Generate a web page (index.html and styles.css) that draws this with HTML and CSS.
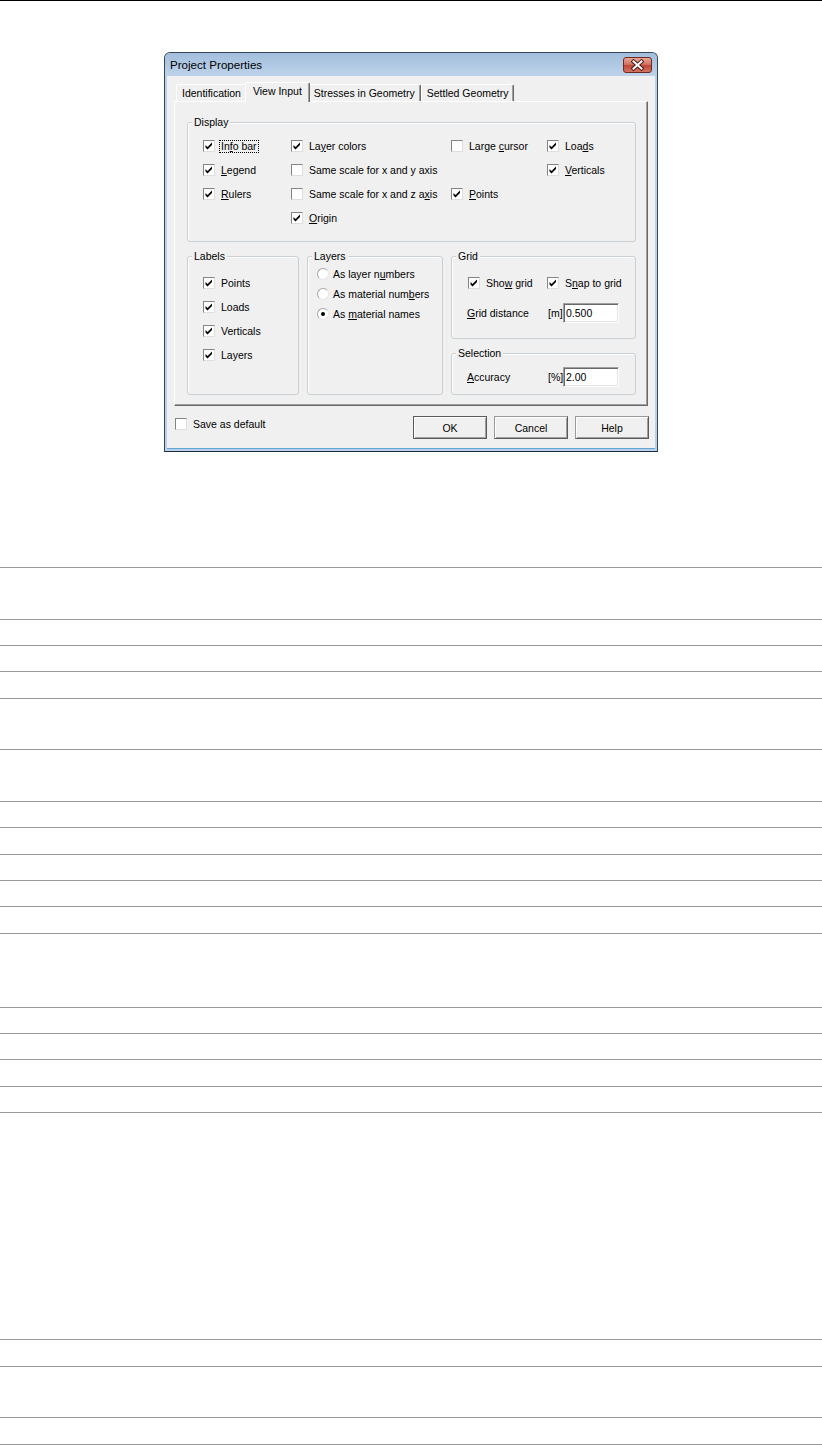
FILE: index.html
```html
<!DOCTYPE html>
<html lang="en">
<head>
    <meta charset="UTF-8">
    <title>Project Properties</title>
    <link rel="stylesheet" href="styles.css">
</head>
<body>
    <div class="top-rule"></div>

    <div class="window">
        <div class="titlebar">
            <span class="title">Project Properties</span>
            <span class="close">
                <svg width="27" height="14" viewBox="0 0 27 14">
                    <path d="M9.5 3.5 L17.5 10.5 M17.5 3.5 L9.5 10.5" stroke="#4a1a14" stroke-width="4" stroke-linecap="square"/>
                    <path d="M9.5 3.5 L17.5 10.5 M17.5 3.5 L9.5 10.5" stroke="#fff" stroke-width="2" stroke-linecap="square"/>
                </svg>
            </span>
        </div>
        <div class="client">
            <div class="tabs">
                <span class="tab">Identification</span>
                <span class="tab active">View Input</span>
                <span class="tab">Stresses in Geometry</span>
                <span class="tab">Settled Geometry</span>
            </div>

            <div class="page">
                <div class="group display">
                    <span class="group-title">Display</span>
                    <div class="display-options">
                        <label class="check"><span class="box"><svg viewBox="0 0 10 10"><path d="M1.5 4 L3.5 6 L8 1.5 V4 L3.5 8.5 L1.5 6.5 Z"/></svg></span><span class="text focus">In<u>f</u>o bar</span></label>
                        <label class="check"><span class="box"><svg viewBox="0 0 10 10"><path d="M1.5 4 L3.5 6 L8 1.5 V4 L3.5 8.5 L1.5 6.5 Z"/></svg></span><span class="text">La<u>y</u>er colors</span></label>
                        <label class="check"><span class="box"></span><span class="text">Large <u>c</u>ursor</span></label>
                        <label class="check"><span class="box"><svg viewBox="0 0 10 10"><path d="M1.5 4 L3.5 6 L8 1.5 V4 L3.5 8.5 L1.5 6.5 Z"/></svg></span><span class="text">Loa<u>d</u>s</span></label>

                        <label class="check"><span class="box"><svg viewBox="0 0 10 10"><path d="M1.5 4 L3.5 6 L8 1.5 V4 L3.5 8.5 L1.5 6.5 Z"/></svg></span><span class="text"><u>L</u>egend</span></label>
                        <label class="check"><span class="box"></span><span class="text">Same scale for x and y axis</span></label>
                        <span></span>
                        <label class="check"><span class="box"><svg viewBox="0 0 10 10"><path d="M1.5 4 L3.5 6 L8 1.5 V4 L3.5 8.5 L1.5 6.5 Z"/></svg></span><span class="text"><u>V</u>erticals</span></label>

                        <label class="check"><span class="box"><svg viewBox="0 0 10 10"><path d="M1.5 4 L3.5 6 L8 1.5 V4 L3.5 8.5 L1.5 6.5 Z"/></svg></span><span class="text"><u>R</u>ulers</span></label>
                        <label class="check"><span class="box"></span><span class="text">Same scale for x and z a<u>x</u>is</span></label>
                        <label class="check"><span class="box"><svg viewBox="0 0 10 10"><path d="M1.5 4 L3.5 6 L8 1.5 V4 L3.5 8.5 L1.5 6.5 Z"/></svg></span><span class="text"><u>P</u>oints</span></label>
                        <span></span>

                        <span></span>
                        <label class="check"><span class="box"><svg viewBox="0 0 10 10"><path d="M1.5 4 L3.5 6 L8 1.5 V4 L3.5 8.5 L1.5 6.5 Z"/></svg></span><span class="text"><u>O</u>rigin</span></label>
                    </div>
                </div>

                <div class="lower">
                    <div class="group">
                        <span class="group-title">Labels</span>
                        <div class="label-options">
                            <label class="check"><span class="box"><svg viewBox="0 0 10 10"><path d="M1.5 4 L3.5 6 L8 1.5 V4 L3.5 8.5 L1.5 6.5 Z"/></svg></span><span class="text">Points</span></label>
                            <label class="check"><span class="box"><svg viewBox="0 0 10 10"><path d="M1.5 4 L3.5 6 L8 1.5 V4 L3.5 8.5 L1.5 6.5 Z"/></svg></span><span class="text">Loads</span></label>
                            <label class="check"><span class="box"><svg viewBox="0 0 10 10"><path d="M1.5 4 L3.5 6 L8 1.5 V4 L3.5 8.5 L1.5 6.5 Z"/></svg></span><span class="text">Verticals</span></label>
                            <label class="check"><span class="box"><svg viewBox="0 0 10 10"><path d="M1.5 4 L3.5 6 L8 1.5 V4 L3.5 8.5 L1.5 6.5 Z"/></svg></span><span class="text">Layers</span></label>
                        </div>
                    </div>

                    <div class="group">
                        <span class="group-title">Layers</span>
                        <div class="layer-options">
                            <label class="radio-item"><span class="radio"></span><span class="text">As layer n<u>u</u>mbers</span></label>
                            <label class="radio-item"><span class="radio"></span><span class="text">As material num<u>b</u>ers</span></label>
                            <label class="radio-item"><span class="radio on"></span><span class="text">As <u>m</u>aterial names</span></label>
                        </div>
                    </div>

                    <div class="side">
                        <div class="group grid-box">
                            <span class="group-title">Grid</span>
                            <div class="grid-checks">
                                <label class="check"><span class="box"><svg viewBox="0 0 10 10"><path d="M1.5 4 L3.5 6 L8 1.5 V4 L3.5 8.5 L1.5 6.5 Z"/></svg></span><span class="text">Sho<u>w</u> grid</span></label>
                                <label class="check"><span class="box"><svg viewBox="0 0 10 10"><path d="M1.5 4 L3.5 6 L8 1.5 V4 L3.5 8.5 L1.5 6.5 Z"/></svg></span><span class="text">S<u>n</u>ap to grid</span></label>
                            </div>
                            <div class="field">
                                <span><u>G</u>rid distance</span>
                                <span>[m]</span>
                                <input type="text" value="0.500">
                            </div>
                        </div>
                        <div class="group selection-box">
                            <span class="group-title">Selection</span>
                            <div class="field">
                                <span><u>A</u>ccuracy</span>
                                <span>[%]</span>
                                <input type="text" value="2.00">
                            </div>
                        </div>
                    </div>
                </div>
            </div>

            <div class="footer">
                <label class="check save-default"><span class="box"></span><span class="text">Save as default</span></label>
                <div class="buttons">
                    <button type="button" class="default">OK</button>
                    <button type="button">Cancel</button>
                    <button type="button">Help</button>
                </div>
            </div>
        </div>
    </div>

    <div class="notes">
        <div class="h52"></div>
        <div class="h26"></div>
        <div class="h26"></div>
        <div class="h27"></div>
        <div class="h51"></div>
        <div class="h52"></div>
        <div class="h26"></div>
        <div class="h27"></div>
        <div class="h26"></div>
        <div class="h26"></div>
        <div class="h27"></div>
        <div class="h74"></div>
        <div class="h26"></div>
        <div class="h26"></div>
        <div class="h27"></div>
        <div class="h26"></div>
        <div class="h227"></div>
        <div class="h27"></div>
        <div class="h51"></div>
        <div class="h27"></div>
    </div>
</body>
</html>
```

FILE: styles.css
```css
body {
    margin: 0;
    background-color: #fff;
    color: #000;
    font-family: "Liberation Sans", Arial, sans-serif;
    font-size: 10.5px;
}
.top-rule {
    height: 1px;
    background-color: #000;
}

/* dialog frame */
.window {
    box-sizing: border-box;
    width: 494px;
    height: 400px;
    margin: 51px auto 0;
    padding: 0 2px 2px;
    border: 1px solid #34475c;
    border-bottom-color: #1f2f40;
    border-radius: 6px 6px 0 0;
    background-color: #b9d0e8;
}
.titlebar {
    height: 23px;
    margin: 0 -2px;
    padding: 0 5px;
    display: flex;
    justify-content: space-between;
    align-items: center;
    border-radius: 5px 5px 0 0;
    background: linear-gradient(#a3bedc, #bdd3ea);
}
.title {
    font-size: 11.6px;
}
.close {
    align-self: flex-start;
    margin-top: 4px;
    box-sizing: border-box;
    width: 29px;
    height: 16px;
    border: 1px solid #6b2b22;
    border-radius: 3px;
    background: linear-gradient(#e9a797, #d47262 45%, #c0463a 55%, #d5735f);
}
.close svg {
    display: block;
}
.client {
    height: 373px;
    background-color: #f0f0f0;
    border-bottom: 1px solid #5fa6d8;
    box-sizing: border-box;
}

/* tabs */
.tabs {
    box-sizing: border-box;
    height: 25px;
    padding: 6px 0 0 9px;
    display: flex;
    align-items: flex-end;
}
.tab {
    box-sizing: border-box;
    height: 17px;
    padding: 0 5px;
    line-height: 16px;
    white-space: nowrap;
    border: 1px solid;
    border-color: #fff #696969 transparent #fff;
    border-bottom: none;
    border-radius: 2px 2px 0 0;
    box-shadow: inset -1px 0 0 #a0a0a0;
    background-color: #f0f0f0;
}
.tab.active {
    position: relative;
    z-index: 1;
    height: 20px;
    margin: 0 -2px -1px;
    padding: 0 7px 4px;
}
.page {
    box-sizing: border-box;
    height: 305px;
    margin: 0 7px;
    padding: 20px 11px 0 12px;
    border: 1px solid;
    border-color: #fff #696969 #696969 #fff;
    box-shadow: inset -1px -1px 0 #a0a0a0;
}

/* group boxes */
.group {
    box-sizing: border-box;
    border: 1px solid #c9d1d6;
    border-radius: 3px;
    box-shadow: inset 1px 1px 0 #fff;
}
.group-title {
    display: block;
    width: fit-content;
    margin: -7px 0 0 4px;
    padding: 0 2px;
    line-height: 13px;
    background-color: #f0f0f0;
}
.display {
    height: 120px;
}
.display-options {
    margin-top: 5px;
    padding-left: 15px;
    display: grid;
    grid-template-columns: 88px 160px 96px 1fr;
    grid-auto-rows: 24px;
}
.lower {
    margin-top: 14px;
    height: 139px;
    display: grid;
    grid-template-columns: 112px 136px 185px;
    column-gap: 8px;
}
.label-options {
    margin-top: 8px;
    padding-left: 15px;
    display: grid;
    grid-auto-rows: 24px;
}
.layer-options {
    margin-top: 1px;
    padding-left: 9px;
    display: grid;
    grid-auto-rows: 20px;
}
.side {
    display: flex;
    flex-direction: column;
    gap: 14px;
}
.grid-box {
    height: 83px;
}
.selection-box {
    height: 42px;
}
.grid-checks {
    margin-top: 8px;
    padding-left: 16px;
    height: 24px;
    display: grid;
    grid-template-columns: 79px auto;
}
.field {
    margin-top: 8px;
    padding-left: 15px;
    height: 20px;
    display: grid;
    grid-template-columns: 81px 15px 56px;
    align-items: center;
}
.selection-box .field {
    margin-top: 7px;
}
.field input {
    box-sizing: border-box;
    width: 56px;
    height: 20px;
    margin: 0;
    padding: 0 2px;
    font-family: inherit;
    font-size: 10.5px;
    color: #000;
    background-color: #fff;
    border: 1px solid;
    border-color: #a0a0a0 #fff #fff #a0a0a0;
    box-shadow: inset 1px 1px 0 #696969, inset -1px -1px 0 #e3e3e3;
    outline: none;
}

/* check boxes and radios */
.check,
.radio-item {
    display: flex;
    align-items: center;
    gap: 4px;
    white-space: nowrap;
}
.radio-item {
    gap: 2px;
}
.box {
    box-sizing: border-box;
    width: 12px;
    height: 12px;
    flex: none;
    border: 1px solid;
    border-color: #848484 #dedede #dedede #848484;
    background-color: #fff;
}
.box svg {
    display: block;
    width: 10px;
    height: 10px;
}
.box path {
    fill: #000;
}
.radio {
    box-sizing: border-box;
    width: 12px;
    height: 12px;
    flex: none;
    display: flex;
    align-items: center;
    justify-content: center;
    border: 1px solid;
    border-color: #a8a8a8 #e6e6e6 #e6e6e6 #a8a8a8;
    border-radius: 50%;
    background-color: #fff;
}
.radio.on::after {
    content: '';
    width: 4px;
    height: 4px;
    border-radius: 50%;
    background-color: #000;
}
.text {
    padding: 0 1px;
    line-height: 11px;
    border: 1px dotted transparent;
}
.text.focus {
    border-color: #000;
}

/* footer */
.footer {
    margin-top: 10px;
    padding: 0 6px 0 8px;
    display: flex;
    justify-content: space-between;
}
.save-default {
    align-self: flex-start;
    margin-top: 2px;
    height: 12px;
}
.buttons {
    display: flex;
    gap: 7px;
}
.buttons button {
    box-sizing: border-box;
    width: 74px;
    height: 23px;
    padding: 0;
    font-family: inherit;
    font-size: 10.5px;
    color: #000;
    background-color: #f0f0f0;
    border: 1px solid;
    border-color: #9a9a9a #5a5a5a #5a5a5a #9a9a9a;
    box-shadow: inset 1px 1px 0 #fff, inset -1px -1px 0 #a0a0a0;
}
.buttons button.default {
    border-color: #5a5a5a;
}

/* ruled area below the dialog */
.notes {
    margin-top: 115px;
    border-top: 1px solid #999;
}
.notes div {
    box-sizing: border-box;
    border-bottom: 1px solid #999;
}
.h26 { height: 26px; }
.h27 { height: 27px; }
.h51 { height: 51px; }
.h52 { height: 52px; }
.h74 { height: 74px; }
.h227 { height: 227px; }
```
